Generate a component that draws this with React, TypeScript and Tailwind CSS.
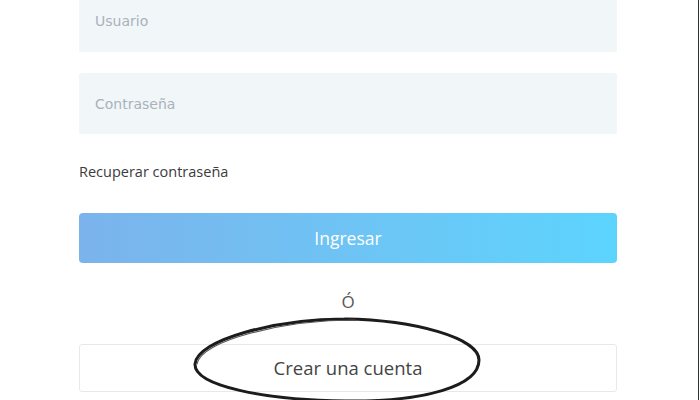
import React from 'react';

export default function App() {
  return (
    <div className="flex h-[400px] w-[700px] overflow-hidden bg-white" style={{ fontFamily: '"Open Sans", "DejaVu Sans", sans-serif' }}>
      <div className="relative w-[698px] h-full">
        <div className="flex flex-col w-[538px] ml-[79px] -mt-[10px]">
          {/* Inputs */}
          <input
            placeholder="Usuario"
            className="h-[62px] w-full bg-[#f1f6f9] px-4 text-[14px] text-[#333] placeholder:text-[#a9b2ba] outline-none font-['DejaVu_Sans',sans-serif] rounded-[2px]"
          />
          <input
            placeholder="Contraseña"
            className="mt-[21px] h-[61px] w-full bg-[#f1f6f9] px-4 text-[14px] text-[#333] placeholder:text-[#a9b2ba] outline-none font-['DejaVu_Sans',sans-serif] rounded-[2px]"
          />

          <a className="mt-[29px] text-[14.5px] leading-[18px] text-[#3b3b3b]">Recuperar contraseña</a>

          <button className="mt-[32px] h-[50px] w-full rounded-[4px] bg-gradient-to-r from-[#7bb3ec] to-[#5bd4fd] text-white text-[17.5px]">
            Ingresar
          </button>

          <div className="mt-[29px] text-center text-[17px] leading-[20px] text-[#555]">Ó</div>

          <button className="mt-[32px] h-[48px] w-full rounded-[3px] border border-[#e6e8ea] bg-white text-[18.5px] text-[#444]">
            Crear una cuenta
          </button>
        </div>

        {/* hand-drawn circle around "Crear una cuenta" */}
        <svg className="absolute left-[185px] top-[310px] pointer-events-none" width="310" height="100" viewBox="0 0 310 100">
          <defs>
            <filter id="soft" x="-10%" y="-10%" width="120%" height="120%">
              <feGaussianBlur stdDeviation="0.6" />
            </filter>
          </defs>
          <g filter="url(#soft)" fill="none" stroke="#1a1a1a" strokeLinecap="round">
            <path
              d="M160 9 C 90 9, 12 30, 10 54 C 9 76, 80 90, 160 91 C 240 92, 294 76, 294 50 C 294 28, 230 10, 160 9"
              strokeWidth="3"
            />
            <path
              d="M170 10 C 100 10, 16 30, 12 54"
              strokeWidth="1.2"
              stroke="#555"
            />
          </g>
        </svg>
      </div>
      <div className="w-[1px] h-full bg-[#2a322f]" />
      <div className="w-[1px] h-full bg-white" />
    </div>
  );
}
